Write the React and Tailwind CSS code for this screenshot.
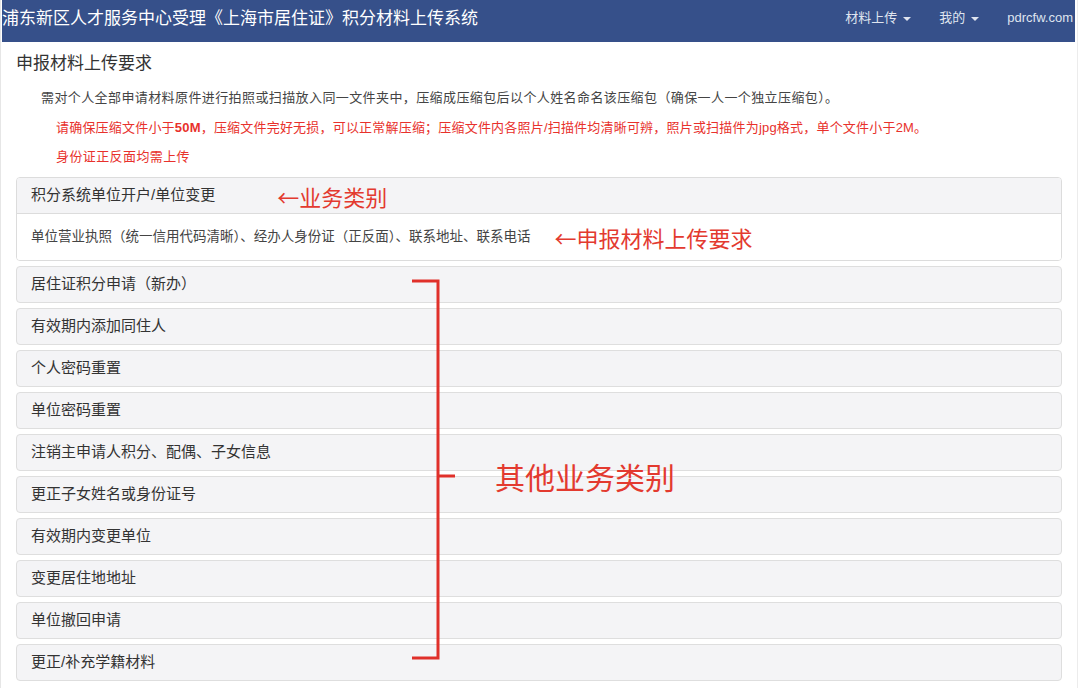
const font = { fontFamily: '"Liberation Sans", "Noto Sans CJK SC", sans-serif' };
const note = { fontFamily: '"Noto Sans CJK SC", sans-serif' };

const items = [
  "居住证积分申请（新办）",
  "有效期内添加同住人",
  "个人密码重置",
  "单位密码重置",
  "注销主申请人积分、配偶、子女信息",
  "更正子女姓名或身份证号",
  "有效期内变更单位",
  "变更居住地地址",
  "单位撤回申请",
  "更正/补充学籍材料",
];

function Caret() {
  return <span className="ml-1.5 inline-block h-0 w-0 border-x-4 border-t-4 border-x-transparent border-t-[#dfe4ef] align-middle" />;
}

export default function App() {
  return (
    <div className="relative h-[688px] w-[1080px] overflow-hidden bg-white" style={font}>
      <div className="mx-[2px] flex h-[42px] w-[1073px] items-center justify-between bg-[#36508a] pb-[6px]">
        <div className="text-[17px] leading-none text-white">浦东新区人才服务中心受理《上海市居住证》积分材料上传系统</div>
        <div className="flex items-center text-[13px] text-[#dfe4ef]">
          <span className="mr-[28px]">材料上传<Caret /></span>
          <span className="mr-[28px]">我的<Caret /></span>
          <span className="mr-[2px]">pdrcfw.com</span>
        </div>
      </div>

      <div className="absolute inset-y-0 left-0 w-px bg-[#e6e6e6]" />
      <div className="absolute inset-y-0 right-[2px] w-px bg-[#ececec]" />

      <div className="pl-[16px] pr-[18px]">
        <h2 className="mt-[12px] text-[17px] leading-[20px] text-[#333]">申报材料上传要求</h2>
        <p className="mt-[16px] pl-[25px] text-[13px] leading-[16px] tracking-[0.4px] text-[#444]">
          需对个人全部申请材料原件进行拍照或扫描放入同一文件夹中，压缩成压缩包后以个人姓名命名该压缩包（确保一人一个独立压缩包）。
        </p>
        <p className="mt-[14px] pl-[40px] text-[13px] leading-[16px] tracking-[0.2px] text-[#e8312c]">
          请确保压缩文件小于<b>50M</b>，压缩文件完好无损，可以正常解压缩；压缩文件内各照片/扫描件均清晰可辨，照片或扫描件为jpg格式，单个文件小于2M。
        </p>
        <p className="mt-[13px] pl-[40px] text-[13px] leading-[16px] tracking-[0.4px] text-[#e8312c]">身份证正反面均需上传</p>

        <div className="mt-[12px] w-[1046px] overflow-hidden rounded-[4px] border border-[#dcdcdc]">
          <div className="flex h-[36px] items-center border-b border-[#dcdcdc] bg-[#f4f4f6] px-[14px] text-[15px] text-[#333]">
            积分系统单位开户/单位变更
            <span className="ml-[62px] text-[22px] leading-none text-[#e33a2f]" style={note}>←业务类别</span>
          </div>
          <div className="flex h-[46px] items-center bg-white px-[14px] text-[13.5px] text-[#444]">
            单位营业执照（统一信用代码清晰）、经办人身份证（正反面）、联系地址、联系电话
            <span className="ml-[24px] text-[22px] leading-none text-[#e33a2f]" style={note}>←申报材料上传要求</span>
          </div>
        </div>

        <div className="relative mt-[5px] flex w-[1046px] flex-col gap-[5px]">
          {items.map((t) => (
            <div key={t} className="flex h-[37px] items-center rounded-[4px] border border-[#dedede] bg-[#f4f4f6] px-[14px] text-[15px] text-[#333]">
              {t}
            </div>
          ))}

          <svg className="absolute left-[394px] top-[13px]" width="50" height="382" viewBox="0 0 50 382">
            <path d="M2 2 H28 V379 H2" fill="none" stroke="#e0302a" strokeWidth="3" />
            <path d="M28 197 H45" fill="none" stroke="#e0302a" strokeWidth="3" />
          </svg>
          <span className="absolute left-[479px] top-[195px] text-[30px] leading-none text-[#e33a2f]" style={note}>其他业务类别</span>
        </div>
      </div>
    </div>
  );
}
